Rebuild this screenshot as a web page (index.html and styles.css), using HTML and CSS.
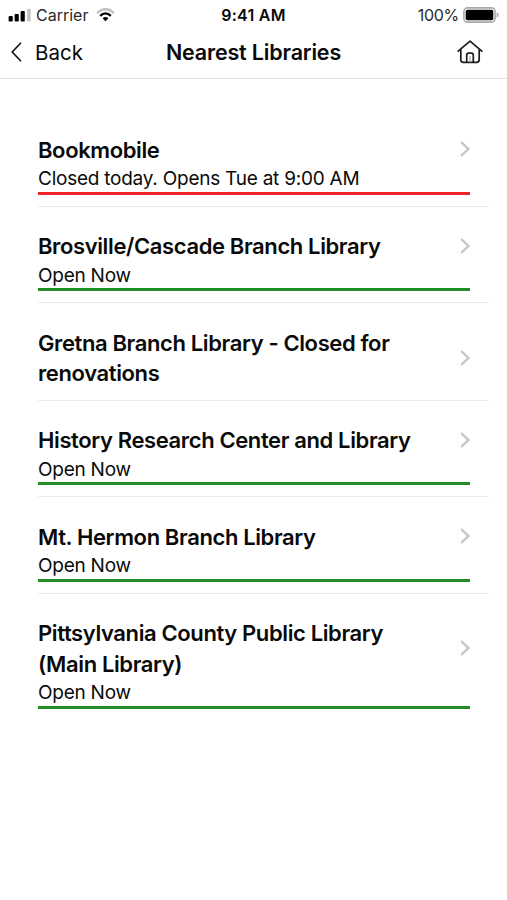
FILE: index.html
```
<!DOCTYPE html>
<html lang="en">
<head>
<meta charset="utf-8">
<title>Nearest Libraries</title>
<link rel="stylesheet" href="styles.css">
</head>
<body>
<div class="status-bar">
  <div class="carrier">
    <svg class="signal" width="23" height="14" viewBox="0 0 23 14"><rect x="0.6" y="8" width="4.2" height="5.5" rx="1"/><rect x="6.6" y="6" width="4.2" height="7.5" rx="1"/><rect x="12.6" y="3" width="4.2" height="10.5" rx="1"/><rect x="19" y="0.8" width="3.8" height="12.7" rx="1" fill="#c8c8c8"/></svg>
    <span>Carrier</span>
    <svg class="wifi" width="19" height="14" viewBox="0 0 19 14"><g fill="none"><path d="M1.2 5.2C6-.1 13-.1 17.8 5.2" stroke="#c0c0c0" stroke-width="2.4"/><path d="M4.2 7.8C7.4 4.6 11.6 4.6 14.8 7.8" stroke="#000" stroke-width="2.4"/></g><path d="M6.6 10.2C8.3 8.7 10.7 8.7 12.4 10.2L9.5 13.2Z"/></svg>
  </div>
  <div class="time">9:41 AM</div>
  <div class="battery">
    <span>100%</span>
    <svg width="36" height="16" viewBox="0 0 36 16"><rect x=".9" y=".9" width="31.2" height="14.2" rx="3.6" fill="#fff" stroke="#a9a9a9" stroke-width="1.6"/><rect x="2.7" y="2.7" width="27.6" height="10.6" rx="1.8"/><path d="M33.6 5.2Q35.6 6 35.6 8T33.6 10.8Z" fill="#a9a9a9"/></svg>
  </div>
</div>
<header class="nav">
  <div class="back">
    <svg width="11" height="20" viewBox="0 0 11 20"><path d="M10 .8 1.2 10 10 19.2" fill="none" stroke="#111" stroke-width="1.6"/></svg>
    <span>Back</span>
  </div>
  <h1>Nearest Libraries</h1>
  <svg class="home" width="26" height="24" viewBox="0 0 26 24"><g fill="none" stroke="#1c1c1c" stroke-width="1.7" stroke-linejoin="round" stroke-linecap="round"><path d="M1.2 11.2 13 1.2 24.8 11.2"/><path d="M3.8 9.8V19.8Q3.8 22.4 6.4 22.4H19.6Q22.2 22.4 22.2 19.8V9.8"/><path d="M9.7 22V15.2Q9.7 13.2 11.7 13.2H14.3Q16.3 13.2 16.3 15.2V22"/><path d="M13 16.5V22" stroke="#999" stroke-width="1"/></g></svg>
</header>
<main class="list">
  <section class="row">
    <div class="heading"><h2>Bookmobile</h2><svg class="chevron" viewBox="0 0 10 16"><path d="M1 1 8.4 8 1 15"/></svg></div>
    <p class="status closed">Closed today. Opens Tue at 9:00 AM</p>
  </section>
  <section class="row">
    <div class="heading"><h2>Brosville/Cascade Branch Library</h2><svg class="chevron" viewBox="0 0 10 16"><path d="M1 1 8.4 8 1 15"/></svg></div>
    <p class="status">Open Now</p>
  </section>
  <section class="row">
    <div class="heading"><h2>Gretna Branch Library - Closed for<br>renovations</h2><svg class="chevron" viewBox="0 0 10 16"><path d="M1 1 8.4 8 1 15"/></svg></div>
  </section>
  <section class="row">
    <div class="heading"><h2>History Research Center and Library</h2><svg class="chevron" viewBox="0 0 10 16"><path d="M1 1 8.4 8 1 15"/></svg></div>
    <p class="status">Open Now</p>
  </section>
  <section class="row">
    <div class="heading"><h2>Mt. Hermon Branch Library</h2><svg class="chevron" viewBox="0 0 10 16"><path d="M1 1 8.4 8 1 15"/></svg></div>
    <p class="status">Open Now</p>
  </section>
  <section class="row">
    <div class="heading"><h2>Pittsylvania County Public Library<br>(Main Library)</h2><svg class="chevron" viewBox="0 0 10 16"><path d="M1 1 8.4 8 1 15"/></svg></div>
    <p class="status">Open Now</p>
  </section>
</main>
</body>
</html>
```
FILE: styles.css
```
* { box-sizing: border-box; }
body { margin: 0; background: #fff; color: #0a0a0a; font-family: Inter, sans-serif; min-height: 900px; }
h1, h2, p { margin: 0; }
svg { display: block; flex: none; }
.status-bar { height: 30px; padding: 0 8px; display: grid; grid-template-columns: 1fr auto 1fr; align-items: center; font-size: 16px; line-height: 20px; }
.carrier, .battery { display: flex; align-items: center; color: #2a2a2a; }
.carrier span { margin: 0 8px 0 5px; }
.battery { justify-content: flex-end; gap: 4px; }
.battery span { letter-spacing: -.3px; }
.time { font-weight: 600; letter-spacing: .25px; }
.nav { height: 49px; padding: 0 24px 5px 11px; border-bottom: 1px solid #e4e4e4; display: grid; grid-template-columns: 1fr auto 1fr; align-items: center; }
.back { display: flex; align-items: center; gap: 13px; font-size: 20.5px; padding-top: 1px; }
.nav h1 { font-size: 21.5px; font-weight: 600; letter-spacing: -.17px; margin-left: 13px; padding-top: 1px; }
.home { justify-self: end; }
.list { padding: 31.1px 18px 0 38px; }
.row { padding: 24.5px 19px 11px 0; border-bottom: 1px solid #ececec; }
.row:last-child { border-bottom: 0; }
.heading { display: flex; align-items: center; justify-content: space-between; }
.heading h2 { font-size: 22px; font-weight: 600; line-height: 30.5px; letter-spacing: -.38px; white-space: nowrap; }
.chevron { width: 10px; height: 16px; margin-bottom: 1px; fill: none; stroke: #c7c7c7; stroke-width: 2.4; }
.status { height: 29.5px; font-size: 19px; line-height: 28.2px; letter-spacing: -.24px; border-bottom: 3px solid #218f25; }
.status.closed { border-color: #f3232b; }
```
